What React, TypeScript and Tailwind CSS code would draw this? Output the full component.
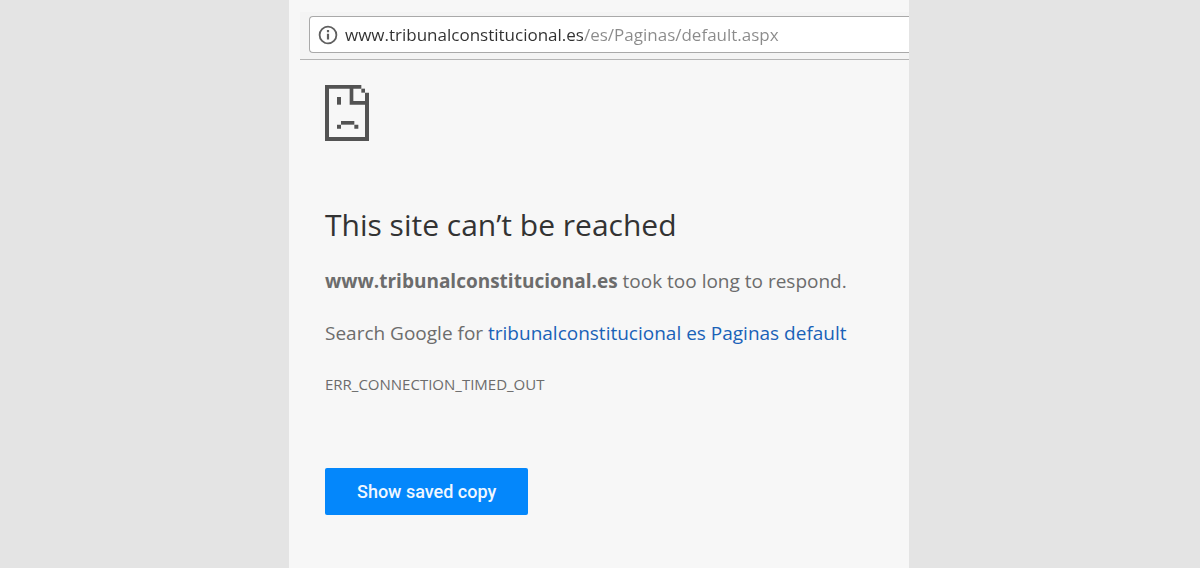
import { useState } from 'react';

function SadPageIcon() {
  return (
    <svg viewBox="0 0 132 168" className="w-11 h-14 text-[#535353]" fill="currentColor" aria-hidden="true">
      {/* page outline */}
      <path d="M0 0H109V11H12V156H120V23H132V168H0Z" />
      {/* folded corner */}
      <path d="M74 0H85V48H132V59H74Z" />
      <path d="M109 11H120V23H109Z" />
      {/* face */}
      <path d="M36 36H48V59H36Z" />
      <path d="M48 108H88V119H48Z" />
      <path d="M36 119H48V131H36ZM88 119H100V131H88Z" />
    </svg>
  );
}

function InfoIcon() {
  return (
    <svg viewBox="0 0 20 20" className="w-5 h-5 shrink-0 text-[#5f5f5f]" fill="none" stroke="currentColor" strokeWidth="1.8" aria-hidden="true">
      <circle cx="10" cy="10" r="8.4" />
      <path d="M10 8.8V14.6M10 5V7.2" strokeWidth="2.2" />
    </svg>
  );
}

export default function App() {
  const [url, setUrl] = useState('www.tribunalconstitucional.es/es/Paginas/default.aspx');

  return (
    <div className="min-h-screen bg-[#e4e4e4] flex justify-center pr-0.5 font-['Open_Sans',sans-serif]">
      <div className="w-full max-w-[620px] bg-[#f7f7f7] pt-3">
        <header className="ml-[11px] pt-1 pb-1.5 pl-[9px] bg-[#f4f4f4] border-b border-[#b4b4b4]">
          <div className="flex items-center h-[37px] pl-2 gap-[7px] bg-white border border-r-0 border-[#a9a9a9] rounded-l">
            <InfoIcon />
            {/* host is dark, the path after it is grey */}
            <input
              type="text"
              aria-label="Address"
              value={url}
              onChange={(e) => setUrl(e.target.value)}
              className="flex-1 min-w-0 h-8 text-[17px] outline-none text-transparent bg-clip-text bg-[linear-gradient(to_right,#303030_239px,#8a8a8a_239px)]"
            />
          </div>
        </header>

        <main className="pl-9 pt-[25px] pb-12 text-[#6c6c6c]">
          <SadPageIcon />
          <h1 className="mt-16 text-[30px] leading-10 text-[#333333]">This site can’t be reached</h1>
          <p className="mt-[22px] text-[19px] leading-7">
            <strong className="font-bold">www.tribunalconstitucional.es</strong> took too long to respond.
          </p>
          <p className="mt-6 text-[19px] leading-7">
            Search Google for{' '}
            <a href="#" className="text-[#1a62b8]">tribunalconstitucional es Paginas default</a>
          </p>
          <p className="mt-[23px] text-[15px] leading-7">ERR_CONNECTION_TIMED_OUT</p>
          <button
            type="button"
            className="mt-[70px] px-8 h-[47px] rounded-xs bg-[#0487fb] text-[#f0f7ff] font-['Roboto',sans-serif] font-medium text-[18px]"
          >
            Show saved copy
          </button>
        </main>
      </div>
    </div>
  );
}
